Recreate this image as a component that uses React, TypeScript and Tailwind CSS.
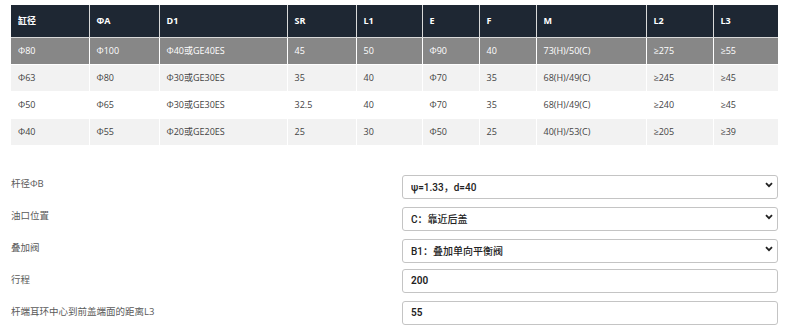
import React from 'react';

const FONT = '"Open Sans", "Noto Sans CJK SC", sans-serif';

const COLS = [78, 70, 128, 69, 66, 57, 57, 110, 67, 65];
const HEAD = ['缸径', 'ΦA', 'D1', 'SR', 'L1', 'E', 'F', 'M', 'L2', 'L3'];

const ROWS = [
  ['Φ80', 'Φ100', 'Φ40或GE40ES', '45', '50', 'Φ90', '40', '73(H)/50(C)', '≥275', '≥55'],
  ['Φ63', 'Φ80', 'Φ30或GE30ES', '35', '40', 'Φ70', '35', '68(H)/49(C)', '≥245', '≥45'],
  ['Φ50', 'Φ65', 'Φ30或GE30ES', '32.5', '40', 'Φ70', '35', '68(H)/49(C)', '≥240', '≥45'],
  ['Φ40', 'Φ55', 'Φ20或GE20ES', '25', '30', 'Φ50', '25', '40(H)/53(C)', '≥205', '≥39'],
];

// row backgrounds: selected row is gray, then striped
const rowCls = (i: number) =>
  i === 0 ? 'bg-[#878787] text-white' : i % 2 === 1 ? 'bg-[#f2f2f2] text-[#444]' : 'bg-white text-[#444]';

const Chevron = () => (
  <svg className="pointer-events-none absolute right-[5px] top-1/2 -translate-y-1/2" width="8" height="6" viewBox="0 0 8 6">
    <path d="M1 1.2 L4 4.2 L7 1.2" fill="none" stroke="#222" strokeWidth="1.8" />
  </svg>
);

const SelectField = ({ value }: { value: string }) => (
  <div className="relative h-[24px]">
    <select
      defaultValue={value}
      className="h-full w-full appearance-none rounded-[3px] border border-[#c4c4c4] bg-white pl-[8px] text-[10px] font-medium text-[#222] outline-none"
      style={{ fontFamily: 'Roboto, "Noto Sans CJK SC", sans-serif' }}
    >
      <option>{value}</option>
    </select>
    <Chevron />
  </div>
);

const InputField = ({ value }: { value: string }) => (
  <input
    defaultValue={value}
    className="h-[24px] w-full rounded-[3px] border border-[#c4c4c4] bg-white pl-[8px] text-[10px] font-semibold text-[#222] outline-none"
    style={{ fontFamily: 'Roboto, "Noto Sans CJK SC", sans-serif' }}
  />
);

const FIELDS: { label: string; kind: 'select' | 'input'; value: string }[] = [
  { label: '杆径ΦB', kind: 'select', value: 'ψ=1.33，d=40' },
  { label: '油口位置', kind: 'select', value: 'C：靠近后盖' },
  { label: '叠加阀', kind: 'select', value: 'B1：叠加单向平衡阀' },
  { label: '行程', kind: 'input', value: '200' },
  { label: '杆端耳环中心到前盖端面的距离L3', kind: 'input', value: '55' },
];

export default function App() {
  return (
    <div className="h-[331px] w-[790px] overflow-hidden bg-white pl-[11px] pr-[12px] pt-[5px]" style={{ fontFamily: FONT }}>
      <table className="w-[767px] table-fixed border-collapse text-[9px]">
        <colgroup>
          {COLS.map((w, i) => (
            <col key={i} style={{ width: w }} />
          ))}
        </colgroup>
        <thead>
          <tr className="h-[32px] bg-[#1e2733] text-white">
            {HEAD.map((h) => (
              <th key={h} className="border-r border-b border-[#d9d9d9] pl-[7px] text-left font-bold last:border-r-0">
                {h}
              </th>
            ))}
          </tr>
        </thead>
        <tbody>
          {ROWS.map((r, i) => (
            <tr key={i} className={`h-[27px] ${rowCls(i)}`}>
              {r.map((c, j) => (
                <td key={j} className="border-r border-b border-white pl-[7px] last:border-r-0">
                  {c}
                </td>
              ))}
            </tr>
          ))}
        </tbody>
      </table>

      <div className="mt-[27px] grid grid-cols-[391px_1fr] gap-y-[8px]">
        {FIELDS.map((f) => (
          <React.Fragment key={f.label}>
            <div className="flex h-[24px] items-center text-[9.5px] text-[#5a5a5a]">{f.label}</div>
            {f.kind === 'select' ? <SelectField value={f.value} /> : <InputField value={f.value} />}
          </React.Fragment>
        ))}
      </div>
    </div>
  );
}
